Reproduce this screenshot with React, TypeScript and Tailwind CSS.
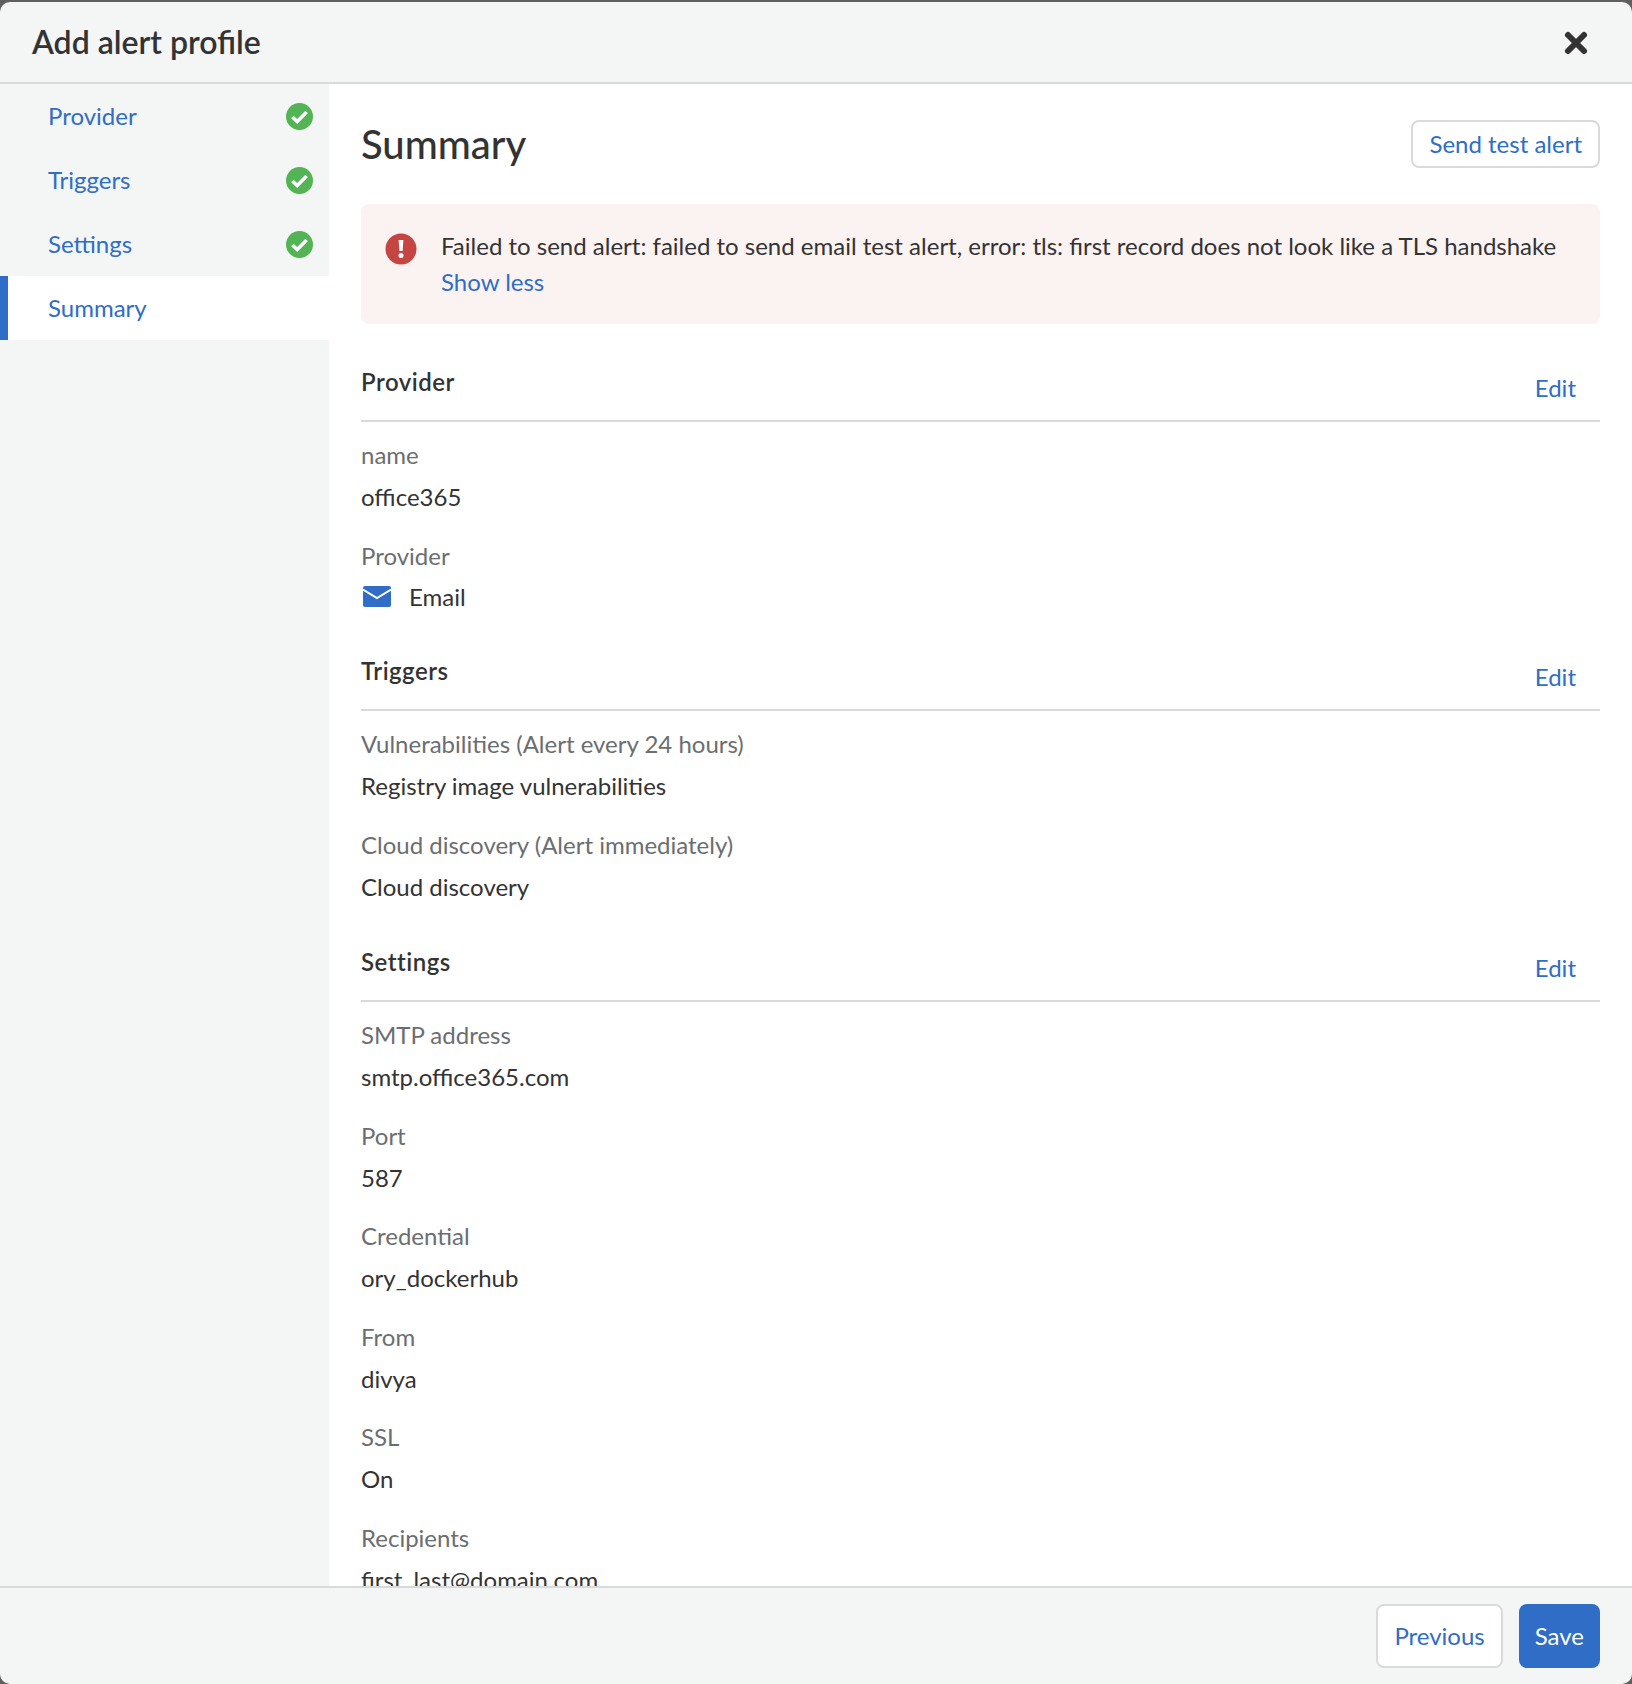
import React from "react";
import { X } from "lucide-react";

function Check() {
  return (
    <svg viewBox="0 0 28 28" className="w-[27px] h-[27px] mr-[0.5px] shrink-0">
      <circle cx="14" cy="14" r="14" fill="#52b454" />
      <path d="M6.6 14.4l5 4.8 9.8-9.8" fill="none" stroke="#fff" strokeWidth="3.6" strokeLinejoin="miter" />
    </svg>
  );
}

function SideItem({ label, done, active }: { label: string; done?: boolean; active?: boolean }) {
  return (
    <div
      className={
        active
          ? "h-16 flex items-center justify-between bg-white border-l-8 border-[#2f6dc6] pl-10 pr-4 text-[#2f6dc6]"
          : "h-16 flex items-center justify-between pl-12 pr-4 text-[#2f6dc6]"
      }
    >
      <span>{label}</span>
      {done && <Check />}
    </div>
  );
}

function Field({ label, children }: { label: string; children: React.ReactNode }) {
  return (
    <div className="mb-[22.5px]">
      <div className="text-[#6b6e70] mb-[6px]">{label}</div>
      <div className="text-[#333]">{children}</div>
    </div>
  );
}

function Section({ title, className, children }: { title: string; className: string; children: React.ReactNode }) {
  return (
    <section className={className}>
      <div className="h-[59px] flex items-start justify-between border-b-2 border-[#d9dbdb] mb-[15px]">
        <h3 className="font-semibold tracking-[0.5px] text-[#333] mt-[1px]">{title}</h3>
        <button className="text-[#2f6dc6] px-6 mt-[7px]">Edit</button>
      </div>
      {children}
    </section>
  );
}

export default function App() {
  return (
    <div className="h-[1684px] bg-[#5f5f5f] pt-[2px] overflow-hidden font-['Lato',sans-serif] text-[24px] leading-[36px]">
      <div className="h-[1682px] flex flex-col bg-[#f4f5f5] rounded-[10px] overflow-hidden">
        <header className="h-[82px] shrink-0 flex items-center justify-between pl-8 pr-10 border-b-2 border-[#d9dbdb]">
          <h1 className="text-[32px] font-semibold text-[#333]">Add alert profile</h1>
          <X className="w-8 h-8 text-[#333] mt-[2px]" strokeWidth={4.5} />
        </header>

        <div className="flex-1 flex min-h-0">
          <nav className="w-[329px] shrink-0">
            <SideItem label="Provider" done />
            <SideItem label="Triggers" done />
            <SideItem label="Settings" done />
            <SideItem label="Summary" active />
          </nav>

          <main className="flex-1 bg-white overflow-hidden px-8 pt-9">
            <div className="flex items-center justify-between h-12">
              <h2 className="text-[40px] font-medium text-[#333]">Summary</h2>
              <button className="h-12 px-4 border-2 border-[#d9dbdb] rounded-lg bg-white text-[#2f6dc6]">
                Send test alert
              </button>
            </div>

            <div className="mt-9 h-[120px] flex gap-6 bg-[#fbf2f2] rounded-lg px-6 py-6">
              <svg viewBox="0 0 32 32" className="w-8 h-8 shrink-0 mt-[5px]">
                <circle cx="16" cy="16" r="15.5" fill="#c44542" />
                <path d="M13.6 7h4.8l-.8 11h-3.2z" fill="#fff" />
                <circle cx="16" cy="22.6" r="2.5" fill="#fff" />
              </svg>
              <div className="text-[#333]">
                <div>Failed to send alert: failed to send email test alert, error: tls: first record does not look like a TLS handshake</div>
                <button className="text-[#2f6dc6]">Show less</button>
              </div>
            </div>

            <Section title="Provider" className="mt-[39px]">
              <Field label="name">office365</Field>
              <Field label="Provider">
                <span className="flex items-center gap-[18px] pl-[2px] -mt-[1px]">
                  <svg viewBox="0 0 28 21" className="w-7 h-[21px] shrink-0">
                    <rect width="28" height="21" rx="2" fill="#2f6dc6" />
                    <path d="M0 3.5l14 8.5 14-8.5" fill="none" stroke="#fff" strokeWidth="2" />
                  </svg>
                  Email
                </span>
              </Field>
            </Section>

            <Section title="Triggers" className="mt-[37.5px]">
              <Field label="Vulnerabilities (Alert every 24 hours)">Registry image vulnerabilities</Field>
              <Field label="Cloud discovery (Alert immediately)">Cloud discovery</Field>
            </Section>

            <Section title="Settings" className="mt-[38.5px]">
              <Field label="SMTP address">smtp.office365.com</Field>
              <Field label="Port">587</Field>
              <Field label="Credential">ory_dockerhub</Field>
              <Field label="From">divya</Field>
              <Field label="SSL">On</Field>
              <Field label="Recipients">first_last@domain.com</Field>
            </Section>
          </main>
        </div>

        <footer className="h-[98px] shrink-0 flex items-start justify-end gap-4 pt-4 pr-8 border-t-2 border-[#d9dbdb]">
          <button className="h-16 px-4 border-2 border-[#d9dbdb] rounded-lg bg-white text-[#2f6dc6]">Previous</button>
          <button className="h-16 px-4 rounded-lg bg-[#2f6dc6] text-white">Save</button>
        </footer>
      </div>
    </div>
  );
}
